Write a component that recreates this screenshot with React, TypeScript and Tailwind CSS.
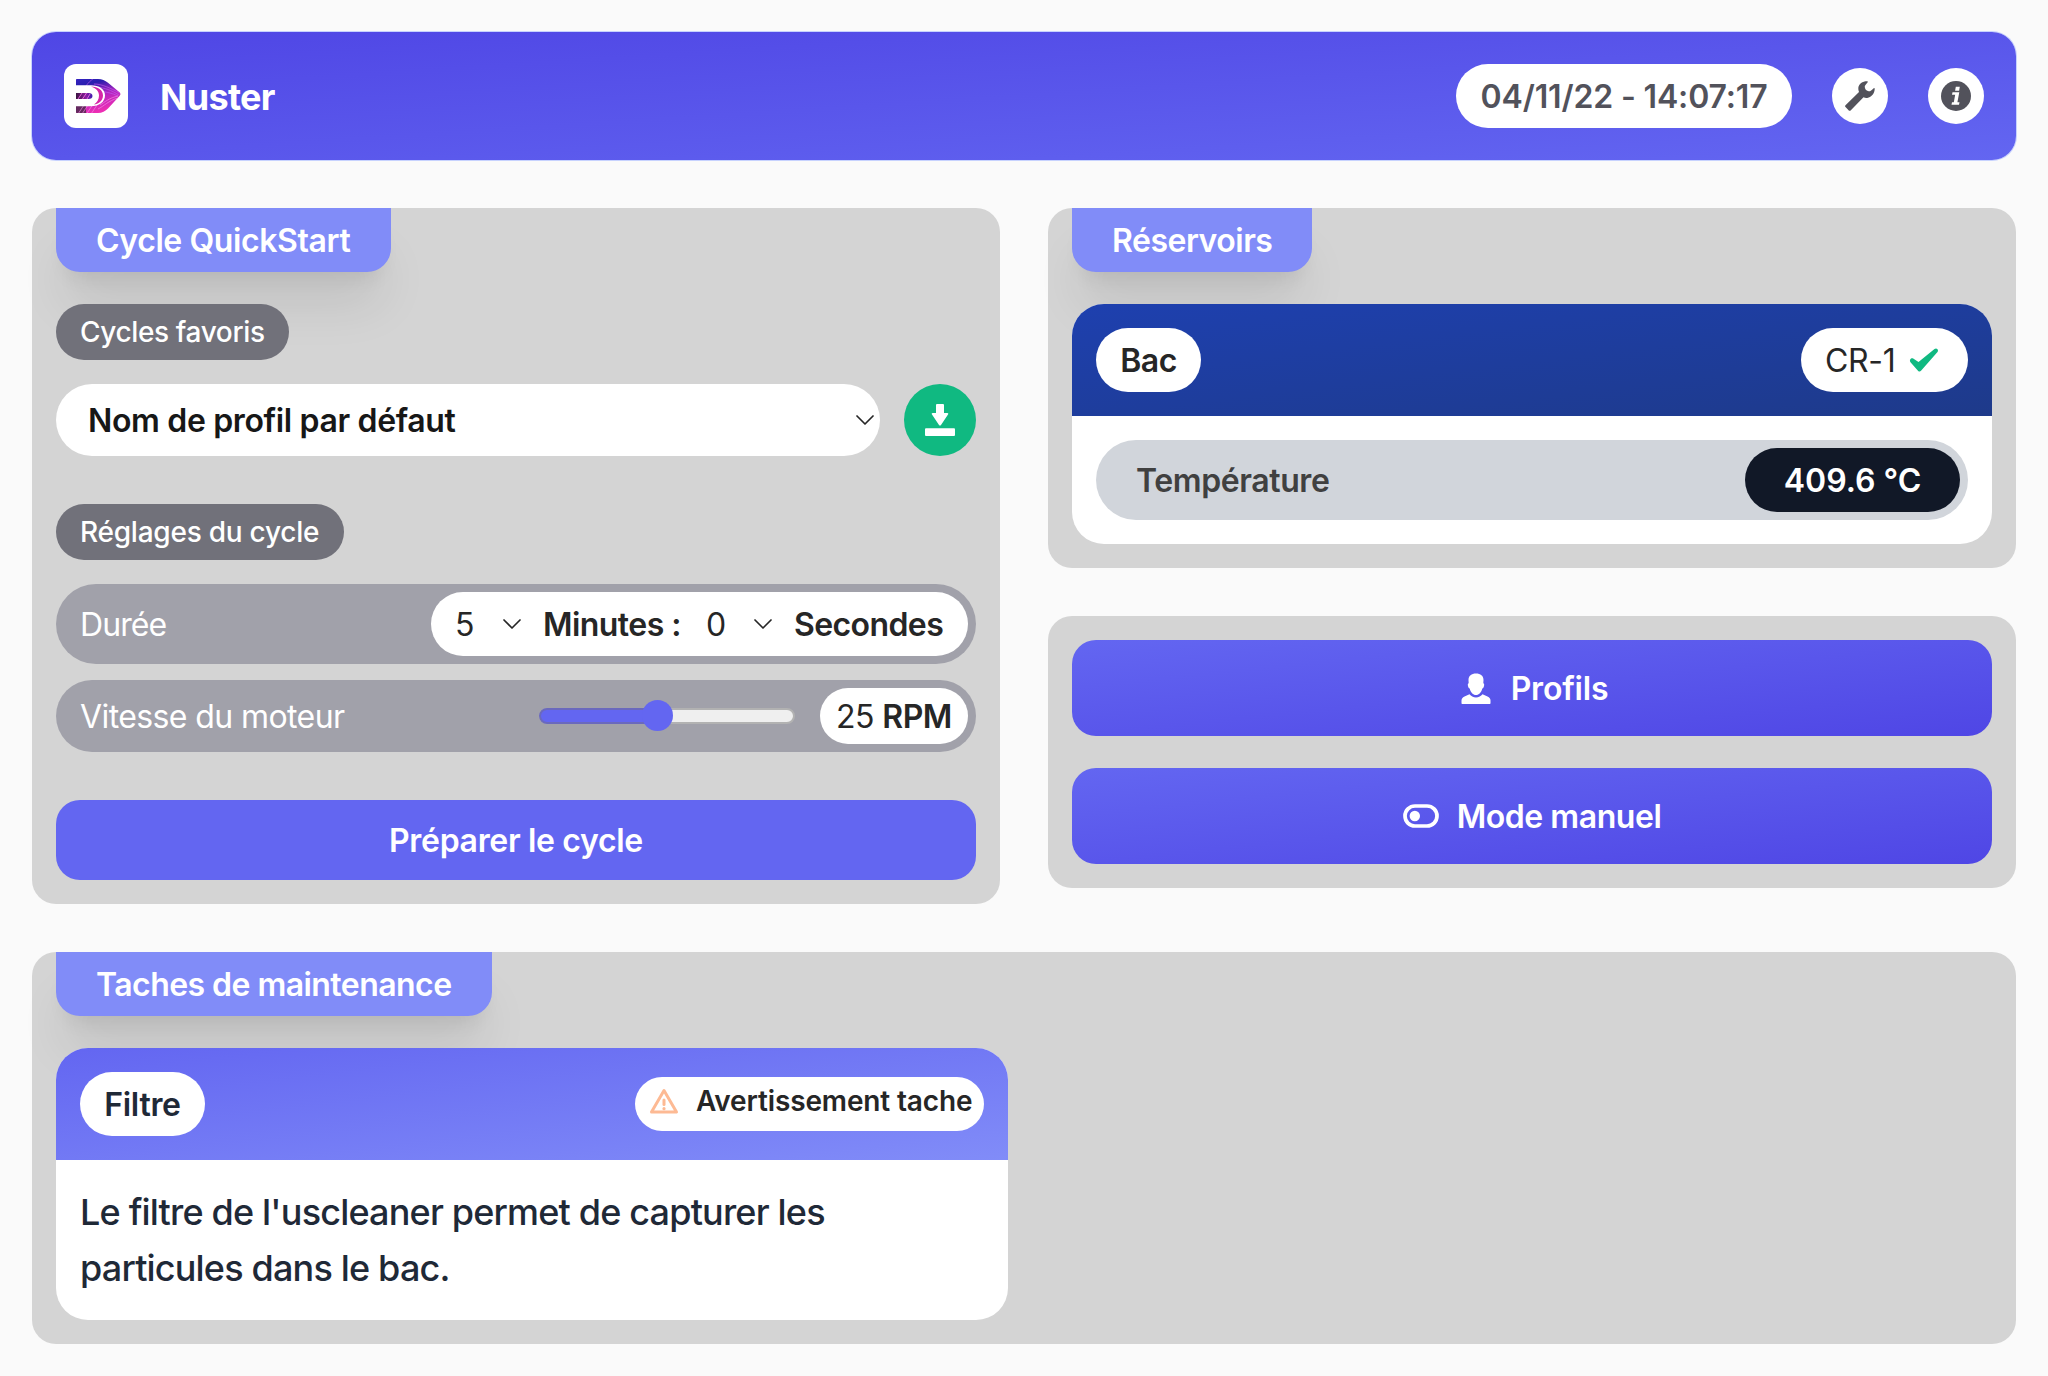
import React from "react";

const Chevron = ({ className = "" }: { className?: string }) => (
  <svg viewBox="0 0 18 10" className={"h-[10px] w-[18px] shrink-0 " + className} fill="none" stroke="#262626" strokeWidth="1.7" strokeLinecap="round" strokeLinejoin="round">
    <path d="M1 1l8 8 8-8" />
  </svg>
);

const Logo = () => (
  <svg viewBox="0 0 64 64" className="h-16 w-16 rounded-xl bg-white">
    <defs>
      <linearGradient id="outer" x1="0.35" y1="0" x2="0.6" y2="1">
        <stop offset="0" stopColor="#4a2be0" />
        <stop offset="0.3" stopColor="#2a1fae" />
        <stop offset="0.5" stopColor="#b425c0" />
        <stop offset="0.75" stopColor="#ee2fb4" />
        <stop offset="1" stopColor="#c22fc0" />
      </linearGradient>
      <linearGradient id="inner" x1="0" y1="0" x2="1" y2="0">
        <stop offset="0" stopColor="#3b1440" />
        <stop offset="0.6" stopColor="#8a1fa0" />
        <stop offset="1" stopColor="#3c1bb0" />
      </linearGradient>
      <clipPath id="arrow">
        <path d="M13 15h21c4 0 7 1.400 10 3.800l11.500 9.400c1.300 1.200 1.300 2.600 0 3.800L44 44.500c-2.500 2.500-6 4.500-10 4.500H13c-.7 0-1-.3-1-1V16c0-.7.3-1 1-1z" />
      </clipPath>
    </defs>
    <g clipPath="url(#arrow)">
      <rect width="64" height="64" fill="url(#outer)" />
      <path d="M12 42h10v7H12z" fill="#4a2a48" opacity="0.8" />
      <g fill="none" stroke="#f58be8" strokeWidth="0.8" opacity="0.8">
        <path d="M14 50l6-9M18 50l6-9M22.500 50l6-9M27 50l6-9" />
        <path d="M22 22c2-3 4-5 8-8M30 20c8 0 16 4 26 9M33 23c8 1 14 3 22 8M36 27c6 1 12 2 18 5" stroke="#c05bf0" />
        <path d="M36 41c5-3 9-7 18-9M34 45c6-3 10-8 20-11" />
      </g>
      <path d="M12 21.300h15c8 0 14 4 14 10.200S35 42.300 27 42.300H12z" fill="#fff" />
      <path d="M27 22.500c7 0 12 3.500 12 9s-5 8.500-9 9c3-2 5-5 5-9s-3-7.500-8-9z" fill="#d626a8" />
    </g>
    <path d="M12 29h12.500c2.500 0 4 1.300 4 3s-1.500 3-4 3H12z" fill="url(#inner)" />
    <path d="M14 35l4-6M18.500 35l4-6M23 35l3-5" stroke="#f06be0" strokeWidth="0.9" />
  </svg>
);

const Wrench = () => (
  <svg viewBox="0 0 32 32" className="h-8 w-8" fill="#52525b">
    <path d="M23 1.200c-4.500 0-8.300 2.600-8.700 6.800-.1 1.500.2 2.800.7 4L1.500 25.200c-.6.6-.6 1.200 0 1.700l3.300 3.500c.6.6 1.200.6 1.800 0L19.500 17.300c1.500.6 3 .8 4.500.4 4-1 6.700-4.700 6.700-8.900 0-.8-.6-.9-1.200-.4-1.200 1.200-2.200 2-3.500 2.900-1.500 0-2.800-.4-4-1.300-1-1.200-1.300-2.500-1.200-4 .8-1.300 1.600-2.400 2.700-3.500.6-.7.300-1.300-.5-1.300z" />
  </svg>
);

const Info = () => (
  <svg viewBox="0 0 32 32" className="h-8 w-8">
    <circle cx="16" cy="16" r="15" fill="#52525b" />
    <path fill="#fff" d="M15.800 6.700h4l-.7 4h-4zM12.500 12.200h6.800L17.400 22.300h2.100l-.5 2.500h-7.500l.5-2.500h1.800l1.400-7.600h-3.200z" />
  </svg>
);

const Download = () => (
  <svg viewBox="0 0 32 32" className="h-8 w-8" fill="#fff">
    <path d="M13 0h6a1 1 0 0 1 1 1v8h3.300c1 0 1.300.8.700 1.500l-7 10.500c-.5.800-1.500.8-2 0l-7-10.500C7.400 9.800 7.700 9 8.700 9H12V1a1 1 0 0 1 1-1z" />
    <rect x="1" y="24.300" width="30" height="7.700" rx="1" />
  </svg>
);

const Check = () => (
  <svg viewBox="0 0 30 24" className="h-6 w-[30px]" fill="#10b981">
    <path d="M1.200 11.500c.8-1.500 2-1.600 3-1l5.300 3.500L25.500 1c1-.8 2-.8 2.800 0s1 2 .2 3L12 22.800c-.8 1-1.800 1-2.800.2L1.700 14.500c-.8-1-1-2-.5-3z" />
  </svg>
);

const User = () => (
  <svg viewBox="0 0 30 31" className="h-[31px] w-[30px]" fill="#fff">
    <path d="M15 .500c4.500 0 7.500 2.300 7.500 6.500 0 1.300-.2 2.500-.2 3.300.8.200 1 1 .8 2.200-.2 1.600-.8 2.700-1.800 3C20.300 19.500 18 22 15 22s-5.300-2.500-6.300-6.500c-1-.3-1.600-1.400-1.800-3-.2-1.200 0-2 .8-2.200 0-.8-.2-2-.2-3.300C7.500 2.800 10.500.500 15 .500z" />
    <path d="M.500 30v-2.500c0-2 1-3 3-4L8.500 21.300c1.500 2 3.800 3.200 6.500 3.200s5-1.200 6.500-3.200l5 2.200c2 1 3 2 3 4V30c0 .7-.3 1-1 1h-27c-.7 0-1-.3-1-1z" />
  </svg>
);

const Toggle = () => (
  <svg viewBox="0 0 36 24" className="h-6 w-9">
    <rect x="2" y="2" width="32" height="20" rx="10" fill="none" stroke="#fff" strokeWidth="3.700" />
    <circle cx="11.800" cy="12" r="5.200" fill="#fff" />
  </svg>
);

const Warn = () => (
  <svg viewBox="0 0 30 26" className="h-[26px] w-[30px]" fill="none" stroke="#fdba94">
    <path d="M15 2.500L27.500 24h-25z" strokeWidth="3" strokeLinejoin="round" />
    <path d="M15 12v4.500" strokeWidth="3" strokeLinecap="round" />
    <circle cx="15" cy="20.700" r="1.600" fill="#fdba94" stroke="none" />
  </svg>
);

const Tab = ({ children, className }: { children: React.ReactNode; className: string }) => (
  <div className={"flex h-16 items-center self-start rounded-b-3xl bg-[#818cf8] pl-10 pt-0.5 text-[32px] font-semibold text-white shadow-[0_40px_50px_-10px_rgba(0,0,0,0.1),0_16px_20px_-12px_rgba(0,0,0,0.1)] " + className}>
    {children}
  </div>
);

export default function App() {
  return (
    <div className="flex h-[1376px] w-[2048px] flex-col whitespace-nowrap bg-[#fafafa] p-8 font-['Inter',sans-serif] leading-none text-neutral-800">
      <header className="flex h-32 shrink-0 items-center rounded-3xl bg-[linear-gradient(to_bottom_right,#4f46e5,#6366f1)] px-8 shadow-[0_0_0_1px_#c7d2fe]">
        <Logo />
        <h1 className="ml-8 pt-0.5 text-[36px] font-bold tracking-[-0.7px] text-white">Nuster</h1>
        <div className="ml-auto flex h-16 w-[336px] items-center justify-center rounded-full bg-white pt-0.5 text-[32px] font-semibold tracking-[-0.15px] text-[#52525b]">
          <span>04/11/22 - 14:07:17</span>
        </div>
        <div className="ml-10 flex h-14 w-14 items-center justify-center rounded-full bg-white"><Wrench /></div>
        <div className="ml-10 flex h-14 w-14 items-center justify-center rounded-full bg-white"><Info /></div>
      </header>

      <div className="mt-12 grid grid-cols-2 items-start gap-12">
        <section className="flex h-[696px] flex-col rounded-3xl bg-[#d4d4d4] px-6">
          <Tab className="w-[335px]"><span className="tracking-[-0.4px]">Cycle QuickStart</span></Tab>
          <div className="relative mt-8 flex h-14 w-[233px] items-center self-start rounded-full bg-[#71717a] pl-6 text-[28px] font-medium tracking-[-0.37px] text-white"><span>Cycles favoris</span></div>
          <div className="mt-6 flex items-center gap-6">
            <div className="flex h-[72px] flex-1 items-center justify-between rounded-full bg-white pl-8 pr-1.5 text-[32px] font-semibold text-neutral-900">
              <span className="pt-0.5 tracking-[-0.35px]">Nom de profil par défaut</span>
              <Chevron />
            </div>
            <div className="flex h-[72px] w-[72px] items-center justify-center rounded-full bg-[#10b981]"><Download /></div>
          </div>
          <div className="mt-12 flex h-14 w-[288px] items-center self-start rounded-full bg-[#71717a] pl-6 text-[28px] font-medium tracking-[-0.24px] text-white"><span>Réglages du cycle</span></div>
          <div className="mt-6 flex h-20 items-center justify-between rounded-full bg-[#a1a1aa] pl-6 pr-2 text-[32px] text-white">
            <span className="pt-0.5 tracking-[-0.9px]">Durée</span>
            <div className="flex h-16 w-[537px] items-center rounded-full bg-white pl-6 text-neutral-800">
              <span className="w-12 pt-0.5">5</span>
              <Chevron />
              <span className="ml-[22px] w-[163px] pt-0.5 font-semibold tracking-[-0.55px]">Minutes :</span>
              <span className="w-12 pt-0.5">0</span>
              <Chevron />
              <span className="ml-[22px] pt-0.5 font-semibold tracking-[-0.6px]">Secondes</span>
            </div>
          </div>
          <div className="mt-4 flex h-[72px] items-center rounded-full bg-[#a1a1aa] pl-6 pr-2 text-[32px] text-white">
            <span className="pt-0.5 tracking-[-0.6px]">Vitesse du moteur</span>
            <div className="relative ml-auto mr-[25px] h-4 w-64 rounded-full border-2 border-[#b2b2b2] bg-[#efefef]">
              <div className="absolute -left-0.5 -top-0.5 h-4 w-[120px] rounded-full border-2 border-[#6a69bd] bg-[#6366f1]" />
              <div className="absolute left-[101px] -top-[10px] h-[31px] w-[31px] rounded-full bg-[#6366f1]" />
            </div>
            <div className="flex h-14 w-[148px] items-center justify-center gap-2 rounded-full bg-white pt-0.5 tracking-[-0.4px] text-neutral-800"><span>25</span><span className="font-semibold">RPM</span></div>
          </div>
          <div className="mt-12 flex h-20 items-center justify-center rounded-3xl bg-[#6366f1] pt-0.5 text-[32px] font-semibold tracking-[-0.33px] text-white"><span>Préparer le cycle</span></div>
        </section>

        <div className="flex flex-col gap-12">
          <section className="flex h-[360px] flex-col rounded-3xl bg-[#d4d4d4] px-6">
            <Tab className="w-[240px]"><span className="tracking-[-0.5px]">Réservoirs</span></Tab>
            <div className="relative mt-8 overflow-hidden rounded-[32px] bg-white">
              <div className="flex h-28 items-center justify-between bg-[linear-gradient(to_bottom_right,#1e40af,#1e3a8a)] px-6 text-[32px]">
                <div className="flex h-16 w-[105px] items-center justify-center rounded-full bg-white pt-0.5 font-semibold tracking-[-0.5px]"><span>Bac</span></div>
                <div className="flex h-16 w-[167px] items-center gap-[13px] rounded-full bg-white pl-6"><span className="pt-0.5 tracking-[-0.3px]">CR-1</span><Check /></div>
              </div>
              <div className="p-6">
                <div className="flex h-20 items-center justify-between rounded-full bg-[#d1d5db] pl-10 pr-2 text-[32px] font-semibold text-neutral-700">
                  <span className="pt-0.5 tracking-[-0.4px]">Température</span>
                  <div className="flex h-16 w-[215px] items-center justify-center rounded-full bg-[#111827] pt-0.5 text-white"><span>409.6 °C</span></div>
                </div>
              </div>
            </div>
          </section>
          <section className="flex h-[272px] flex-col gap-8 rounded-3xl bg-[#d4d4d4] p-6 text-[32px] font-semibold text-white">
            <div className="flex h-24 items-center justify-center gap-[20px] rounded-3xl bg-[linear-gradient(to_bottom_right,#6366f1,#4f46e5)] pl-[5px]"><User /><span className="pt-0.5 tracking-[-0.2px]">Profils</span></div>
            <div className="flex h-24 items-center justify-center gap-[18px] rounded-3xl bg-[linear-gradient(to_bottom_right,#6366f1,#4f46e5)]"><Toggle /><span className="pt-0.5 tracking-[-0.45px]">Mode manuel</span></div>
          </section>
        </div>
      </div>

      <section className="mt-12 flex h-[392px] flex-col rounded-3xl bg-[#d4d4d4] px-6">
        <Tab className="w-[436px]"><span className="tracking-[-0.55px]">Taches de maintenance</span></Tab>
        <div className="relative mt-8 h-[272px] w-[952px] overflow-hidden rounded-[32px] bg-white text-[#1f2937]">
          <div className="flex h-28 items-center justify-between bg-[linear-gradient(to_bottom_right,#6366f1,#818cf8)] px-6">
            <div className="flex h-16 w-[125px] items-center justify-center rounded-full bg-white pt-0.5 text-[32px] font-semibold tracking-[-0.3px]"><span>Filtre</span></div>
            <div className="flex h-[54px] w-[349px] items-center rounded-full bg-white pb-1.5 pl-[14px] text-[28px] font-semibold tracking-[-0.14px] text-neutral-800"><Warn /><span className="ml-[17px]">Avertissement tache</span></div>
          </div>
          <p className="px-6 pt-6 text-[36px] font-medium leading-[56px] tracking-[-0.82px]"><span>Le filtre de l'uscleaner permet de capturer les</span><br /><span>particules dans le bac.</span></p>
        </div>
      </section>
    </div>
  );
}
